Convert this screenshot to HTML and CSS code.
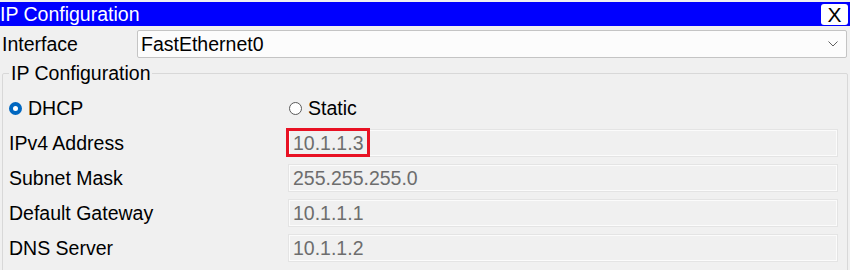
FILE: index.html
```html
<!DOCTYPE html>
<html lang="en">
<head>
    <meta charset="UTF-8">
    <title>IP Configuration</title>
    <link rel="stylesheet" href="styles.css">
</head>
<body>
    <div class="window">
        <div class="titlebar">
            <span class="title">IP Configuration</span>
            <span class="close">X</span>
        </div>

        <div class="iface-row">
            <span class="iface-label">Interface</span>
            <div class="select">
                <span>FastEthernet0</span>
                <svg class="chevron" width="10" height="6" viewBox="0 0 10 6">
                    <path d="M0.5 0.5 L5 5 L9.5 0.5" fill="none" stroke="#606060" stroke-width="1"/>
                </svg>
            </div>
        </div>

        <fieldset class="ipconf">
            <legend>IP Configuration</legend>
            <div class="form-grid">
                <label class="radio"><span class="dot checked"></span>DHCP</label>
                <label class="radio"><span class="dot"></span>Static</label>

                <span class="label">IPv4 Address</span>
                <div class="field highlighted">10.1.1.3<span class="mark"></span></div>

                <span class="label">Subnet Mask</span>
                <div class="field">255.255.255.0</div>

                <span class="label">Default Gateway</span>
                <div class="field">10.1.1.1</div>

                <span class="label">DNS Server</span>
                <div class="field">10.1.1.2</div>
            </div>
        </fieldset>
    </div>
</body>
</html>
```

FILE: styles.css
```css
body {
    margin: 0;
    background-color: #f0f0f0;
    font-family: "Liberation Sans", Arial, sans-serif;
    font-size: 19.5px;
    color: #000;
}

.window {
    padding-top: 2px;
}

.titlebar {
    height: 24px;
    background-color: #0000ff;
    color: #fff;
    display: flex;
    align-items: center;
    justify-content: space-between;
}

.close {
    width: 27px;
    height: 21px;
    margin-right: 2px;
    background-color: #fff;
    color: #000;
    border-radius: 3px;
    font-size: 21px;
    line-height: 22px;
    text-align: center;
}

.iface-row {
    display: flex;
    align-items: center;
    margin-top: 4px;
    height: 28px;
}

.iface-label {
    width: 135px;
    padding-left: 2px;
}

.select {
    flex: 1;
    height: 26px;
    margin-right: 3px;
    padding: 0 8px 0 3px;
    background-color: #fcfcfc;
    border: 1px solid #c4c4c4;
    border-radius: 2px;
    display: flex;
    align-items: center;
    justify-content: space-between;
}

.ipconf {
    margin: 4px 2px 0 2px;
    padding: 0 0 20px 6px;
    border: 1px solid #d8d8d8;
    border-radius: 2px;
}

.ipconf legend {
    padding: 0 2px;
    margin-left: 0;
}

.form-grid {
    display: grid;
    grid-template-columns: 280px 1fr;
    row-gap: 9px;
    align-items: center;
    padding-right: 10px;
    padding-top: 10px;
}

.radio {
    display: flex;
    align-items: center;
    height: 26px;
}

.radio .dot {
    box-sizing: border-box;
    width: 13px;
    height: 13px;
    border-radius: 50%;
    border: 1px solid #5a5a5a;
    background-color: #fff;
    margin-right: 6px;
}

.radio .dot.checked {
    border: 4px solid #0067c0;
}

.radio:last-child {
    margin-left: -1px;
}

.field {
    position: relative;
    height: 24px;
    padding-left: 3px;
    line-height: 25px;
    color: #6d6d6d;
    border: 1px solid #fbfbfb;
    box-shadow: 0 0 0 1px #e4e4e4;
}

.mark {
    position: absolute;
    left: -4px;
    top: -3px;
    width: 78px;
    height: 23px;
    border: 3px solid #e81123;
}
```
